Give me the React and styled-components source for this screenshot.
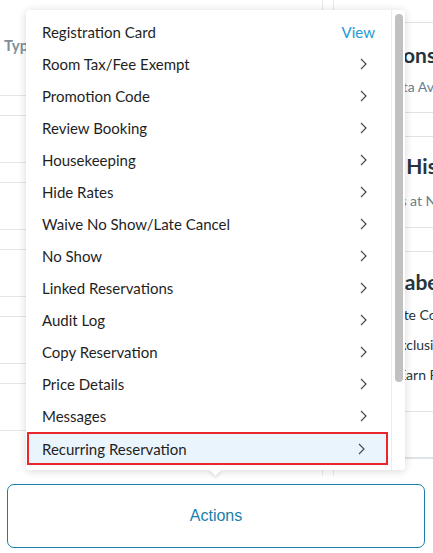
import React from 'react';
import styled, { createGlobalStyle } from 'styled-components';

const GlobalStyle = createGlobalStyle`
  body {
    margin: 0;
    font-family: Lato, "Noto Sans", sans-serif;
    background: #fff;
  }
`

const Page = styled.div`
  position: relative;
  width: 433px;
  height: 553px;
  overflow: hidden;
  background: #fff;
  display: flex;
  flex-direction: column;
`

const Main = styled.div`
  height: 476px;
  display: grid;
  grid-template-columns: 323px 1fr;
  column-gap: 10px;
`

const LeftCol = styled.div`
  border-right: 1px solid #e6e9eb;
`

const TableHead = styled.div`
  height: 96px;
  box-sizing: border-box;
  padding: 35px 0 0 4px;
  border-bottom: 1px solid #e3e6e8;
  font-size: 15px;
  font-weight: 700;
  line-height: 20px;
  color: #7f8f99;
`

const TableRow = styled.div`
  height: 46px;
  margin-top: 19px;
  border-top: 1px solid #e3e6e8;
  border-bottom: 1px solid #e3e6e8;
`

const RightCol = styled.div`
  border-left: 1px solid #e6e9eb;
  padding-left: 12px;
  white-space: nowrap;
`

const Card = styled.div`
  margin-top: ${p => p.$top}px;
  padding: ${p => p.$pad};
  border-top: 1px solid #dde3e7;
  border-bottom: 1px solid #dde3e7;
  display: flex;
  flex-direction: column;
  gap: ${p => p.$gap}px;
`

const CardTitle = styled.div`
  font-size: 21px;
  font-weight: 700;
  line-height: 24px;
  color: #27343d;
`

const CardSub = styled.div`
  font-size: 14px;
  line-height: 18px;
  color: ${p => (p.$dark ? '#27343d' : '#66808e')};
`

const Menu = styled.div`
  position: absolute;
  left: 26px;
  top: 10px;
  width: 379px;
  height: 460px;
  background: #fff;
  border-radius: 4px;
  box-shadow: 0 1px 8px rgba(0, 0, 0, 0.16);
  display: flex;
`

const MenuArrow = styled.div`
  position: absolute;
  left: 185px;
  top: 455px;
  width: 9px;
  height: 9px;
  background: #fff;
  transform: rotate(45deg);
  box-shadow: 2px 2px 3px rgba(0, 0, 0, 0.08);
`

const MenuList = styled.div`
  flex: 1;
  padding: 6px 0 4px;
  position: relative;
  z-index: 1;
  background: #fff;
  border-radius: 4px 0 0 4px;
`

const Item = styled.div`
  height: 32px;
  box-sizing: border-box;
  display: flex;
  align-items: center;
  justify-content: space-between;
  padding: 0 16px;
  font-size: 15px;
  color: #1f1f1f;
  ${p => p.$active && `
    margin: 0 3px 0 1px;
    padding: 0 13px 0 13px;
    height: 33px;
    background: #eaf4fd;
    border: 2px solid #e8262b;
  `}
`

const ViewLink = styled.span`
  color: #1c9ad5;
`

const Chevron = styled.svg`
  width: 8px;
  height: 12px;
  margin-right: 8px;
`

const Track = styled.div`
  box-sizing: border-box;
  width: 14px;
  flex: none;
  border-left: 1px solid #ececec;
  padding: 4px 0 0 3px;
  position: relative;
  z-index: 1;
  background: #fff;
  border-radius: 0 4px 4px 0;
`

const Thumb = styled.div`
  width: 8px;
  height: 368px;
  background: #c1c1c1;
  border-radius: 4px;
`

const Bottom = styled.div`
  padding: 8px 8px 5px 7px;
`

const ActionButton = styled.button`
  width: 100%;
  height: 64px;
  background: #fff;
  border: 1px solid #1b7ca5;
  border-radius: 7px;
  font-family: "Liberation Sans", Arial, sans-serif;
  font-size: 16px;
  color: #1a7fab;
`

const items = [
  'Room Tax/Fee Exempt',
  'Promotion Code',
  'Review Booking',
  'Housekeeping',
  'Hide Rates',
  'Waive No Show/Late Cancel',
  'No Show',
  'Linked Reservations',
  'Audit Log',
  'Copy Reservation',
  'Price Details',
  'Messages',
  'Recurring Reservation',
]

function ChevronIcon() {
  return (
    <Chevron viewBox="0 0 8 12">
      <polyline points="2,1 7,6 2,11" fill="none" stroke="#4a4a4a" strokeWidth="1.2" />
    </Chevron>
  )
}

export default function App() {
  return (
    <Page>
      <GlobalStyle />
      <Main>
        <LeftCol>
          <TableHead>Type</TableHead>
          {[0, 1, 2, 3, 4].map(i => (
            <TableRow key={i} />
          ))}
        </LeftCol>
        <RightCol>
          <Card $top={22} $pad="20px 0 16px" $gap={11}>
            <CardTitle>Additions</CardTitle>
            <CardSub>Room Data Available</CardSub>
          </Card>
          <Card $top={23} $pad="17px 0 17px" $gap={14}>
            <CardTitle>Guest History</CardTitle>
            <CardSub>Two stays at Northwind</CardSub>
          </Card>
          <Card $top={23} $pad="18px 0 27px" $gap={12}>
            <CardTitle>Rate Labels</CardTitle>
            <CardSub $dark>Group Rate Code</CardSub>
            <CardSub $dark>Pricing Exclusive</CardSub>
            <CardSub $dark>Owners Earn Points</CardSub>
          </Card>
          <Card $top={45} $pad="0" $gap={0} />
        </RightCol>
      </Main>
      <Bottom>
        <ActionButton>Actions</ActionButton>
      </Bottom>
      <Menu>
        <MenuArrow />
        <MenuList>
          <Item>
            Registration Card
            <ViewLink>View</ViewLink>
          </Item>
          {items.map(label => (
            <Item key={label} $active={label === 'Recurring Reservation'}>
              {label}
              <ChevronIcon />
            </Item>
          ))}
        </MenuList>
        <Track>
          <Thumb />
        </Track>
      </Menu>
    </Page>
  )
}
